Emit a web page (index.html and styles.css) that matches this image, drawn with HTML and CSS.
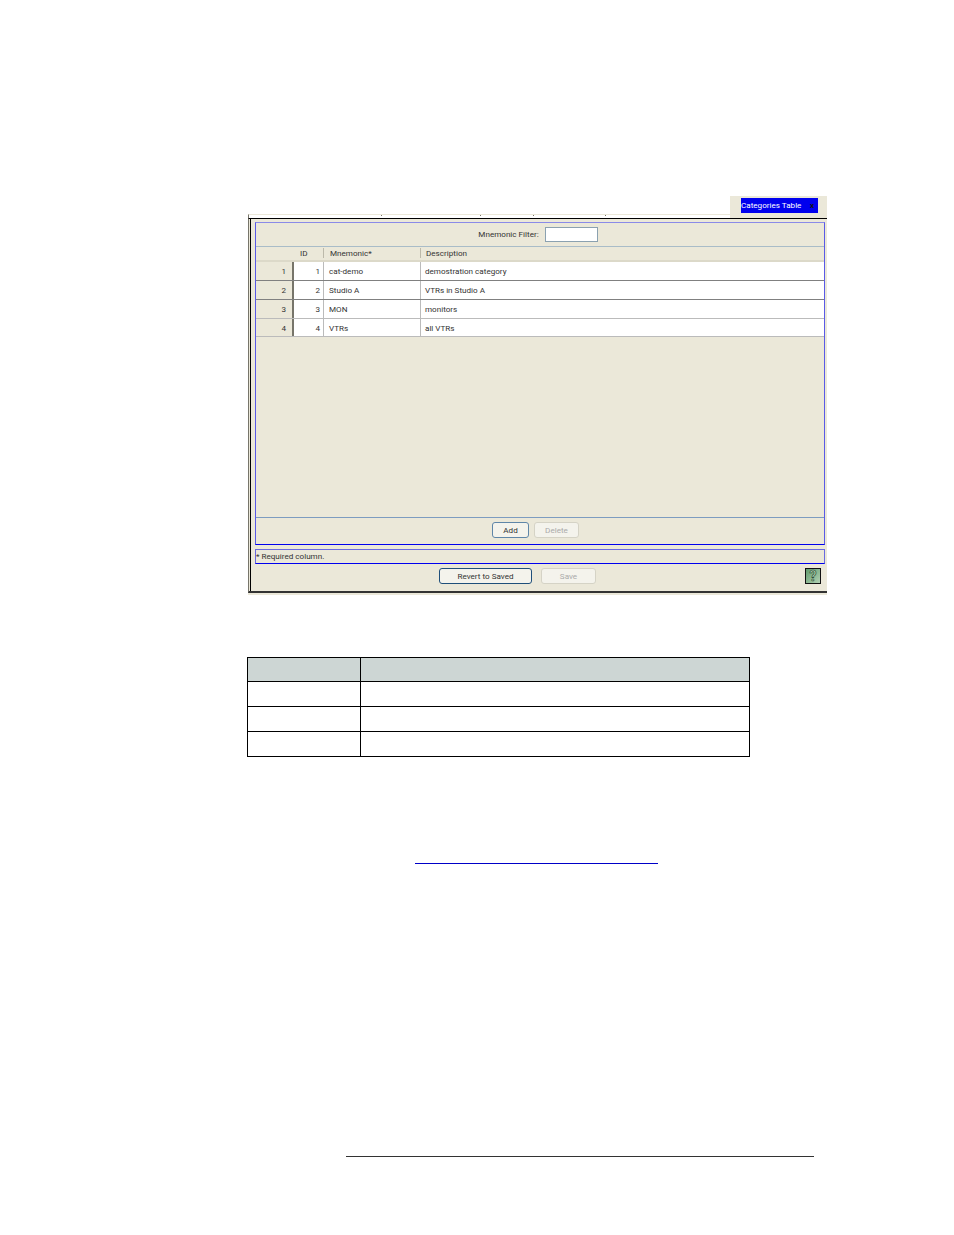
FILE: index.html
```html
<!DOCTYPE html>
<html lang="en">
<head>
    <meta charset="UTF-8">
    <meta name="viewport" content="width=device-width, initial-scale=1.0">
    <title>Categories Table</title>
    <link rel="stylesheet" href="styles.css">
</head>
<body>
    <div class="window">
        <div class="tabstrip">
            <!-- what is left of the cut off tabs -->
            <div class="tab-edge">
                <i class="tick t1"></i><i class="tick t2"></i><i class="tick t3"></i><i class="tick t4"></i>
            </div>
            <div class="tab"><div class="tab-title"><span>Categories Table</span><b>x</b></div></div>
        </div>
        <div class="frame">
            <div class="panel">
                <div class="filter"><span>Mnemonic Filter:</span><div class="filter-input"></div></div>
                <div class="grid-head">
                    <div class="col-num"></div>
                    <div class="col-id">ID</div>
                    <div class="col-mn">Mnemonic*</div>
                    <div class="col-desc">Description</div>
                </div>
                <div class="row dark">
                    <div class="col-num">1</div><div class="col-id">1</div><div class="col-mn">cat-demo</div><div class="col-desc">demostration category</div>
                </div>
                <div class="row dark">
                    <div class="col-num">2</div><div class="col-id">2</div><div class="col-mn">Studio A</div><div class="col-desc">VTRs in Studio A</div>
                </div>
                <div class="row">
                    <div class="col-num">3</div><div class="col-id">3</div><div class="col-mn">MON</div><div class="col-desc">monitors</div>
                </div>
                <div class="row last">
                    <div class="col-num">4</div><div class="col-id">4</div><div class="col-mn">VTRs</div><div class="col-desc">all VTRs</div>
                </div>
                <div class="grid-empty"></div>
                <div class="panel-actions">
                    <button class="btn add">Add</button>
                    <button class="btn delete off">Delete</button>
                </div>
            </div>
            <div class="note">* Required column.</div>
            <div class="actions">
                <button class="btn revert">Revert to Saved</button>
                <button class="btn save off">Save</button>
                <div class="help">?</div>
            </div>
        </div>
        <div class="frame-foot"></div>
    </div>

    <table class="blank-table">
        <tr class="head"><td class="first"></td><td></td></tr>
        <tr><td class="first"></td><td></td></tr>
        <tr><td class="first"></td><td></td></tr>
        <tr><td class="first"></td><td></td></tr>
    </table>

    <div class="link-line"></div>
    <div class="footer-line"></div>
</body>
</html>
```

FILE: styles.css
```css
* {
    box-sizing: border-box;
    margin: 0;
    padding: 0;
}

body {
    background-color: white;
    font-family: Roboto, "Liberation Sans", sans-serif;
    font-size: 8.1px;
    color: #333;
}

.window {
    width: 579px;
    margin: 196px 0 0 248px;
    background-color: white;
}

.tabstrip {
    height: 22px;
    display: flex;
}

.tab-edge {
    flex: 1;
    height: 4px;
    margin-top: 18px;
    border-left: 1px solid #77756a;
    border-top: 1px solid #ebe8d9;
    display: flex;
}

.tick {
    width: 1px;
    height: 1px;
    background-color: #77756a;
}

.t1 { margin-left: 132px; }
.t2 { margin-left: 98px; }
.t3 { margin-left: 52px; }
.t4 { margin-left: 71px; }

.tab {
    width: 97px;
    padding: 2px 9px 5px 11px;
    background-color: #ebe8d9;
}

.tab-title {
    height: 15px;
    padding-bottom: 1px;
    background-color: #0000ee;
    color: white;
    display: flex;
    justify-content: space-between;
    align-items: center;
}

.tab-title b {
    color: #111;
    margin-right: 4px;
}

.frame {
    height: 375px;
    padding: 3px 2px 0 6px;
    background-color: #ebe8d9;
    border-top: 1px solid black;
    border-left: 1px solid #77756a;
    border-bottom: 2px solid #333;
    position: relative;
}

.frame::before {
    content: "";
    position: absolute;
    left: 1px;
    top: 0;
    bottom: 0;
    width: 1px;
    background-color: black;
}

.frame-foot {
    height: 2px;
    background-color: #ebe8d9;
}

.panel {
    height: 323px;
    border: 1px solid #5a5ae6;
    border-top-color: #8a8ae8;
    border-bottom-color: #0000ee;
    display: flex;
    flex-direction: column;
}

.filter {
    height: 24px;
    border-bottom: 1px solid #a9bcc8;
    display: flex;
    justify-content: center;
    align-items: center;
    gap: 6px;
    padding-right: 4px;
}

.filter span {
    margin-bottom: 2px;
}

.filter-input {
    width: 53px;
    height: 15px;
    background-color: white;
    border: 1px solid #8ba1b0;
}

.grid-head {
    height: 15px;
    padding-bottom: 1px;
    display: flex;
    align-items: center;
    border-bottom: 2px solid #dcd9c9;
}

.grid-head .col-id {
    text-align: left;
    padding: 0 0 0 6px;
    border-right: 1px solid #bcb9aa;
}

.grid-head .col-mn {
    padding-left: 6px;
    border-right: 1px solid #bcb9aa;
}

.grid-head .col-num {
    background: none;
    border: 0;
}

.grid-head .col-desc {
    padding-left: 5px;
}

.col-num {
    width: 38px;
    text-align: right;
    padding-right: 6px;
}

.col-id {
    width: 30px;
    text-align: right;
    padding-right: 3px;
}

.col-mn {
    width: 97px;
    padding-left: 5px;
}

.col-desc {
    flex: 1;
    padding-left: 4px;
}

.row {
    height: 19px;
    display: flex;
    background-color: white;
    border-bottom: 1px solid #bbb;
    line-height: 18px;
}

.row.dark {
    border-bottom-color: #808080;
}

.row.last {
    height: 18px;
}

.row .col-num {
    background-color: #ebe8d9;
    border-right: 2px solid #77756a;
}

.row .col-id {
    border-right: 1px solid #bbb;
}

.row .col-mn {
    border-right: 1px solid #bbb;
}

.grid-empty {
    flex: 1;
    border-bottom: 1px solid #7d9cc0;
}

.panel-actions {
    height: 26px;
    display: flex;
    justify-content: center;
    align-items: center;
    gap: 5px;
    padding: 0 9px 2px 0;
}

.btn {
    font-family: Roboto, "Liberation Sans", sans-serif;
    font-size: 8.1px;
    color: #333;
    height: 16px;
    background-color: #f4f3ec;
    border: 1px solid #5f86a8;
    border-radius: 3px;
}

.btn.off {
    color: #aaa;
    border-color: #d5d3c6;
}

.add {
    width: 37px;
}

.delete {
    width: 45px;
}

.note {
    height: 15px;
    margin-top: 4px;
    border: 1px solid #6a6ae0;
    border-bottom-color: #0000ee;
    line-height: 13px;
}

.actions {
    height: 16px;
    margin-top: 4px;
    display: flex;
    align-items: center;
}

.revert {
    width: 93px;
    margin-left: 184px;
    border-color: #1f4f7a;
}

.save {
    width: 55px;
    margin-left: 9px;
}

.help {
    width: 16px;
    height: 16px;
    margin-left: auto;
    margin-right: 4px;
    background: linear-gradient(135deg, #5f9a6c, #b3d2b4);
    border: 1px solid #111;
    color: #a9cdaa;
    -webkit-text-stroke: 0.6px #24402c;
    font-size: 14px;
    font-weight: bold;
    text-align: center;
    line-height: 14px;
}

.blank-table {
    width: 503px;
    margin: 62px 0 0 247px;
    border-collapse: collapse;
}

.blank-table td {
    height: 25px;
    border: 1px solid black;
}

.blank-table .first {
    width: 113px;
}

.blank-table .head td {
    height: 24px;
    background-color: #cdd6d4;
}

.link-line {
    width: 243px;
    height: 1px;
    margin: 106px 0 0 415px;
    background-color: #0000c8;
}

.footer-line {
    width: 468px;
    height: 1px;
    margin: 292px 0 0 346px;
    background-color: #333;
}
```
